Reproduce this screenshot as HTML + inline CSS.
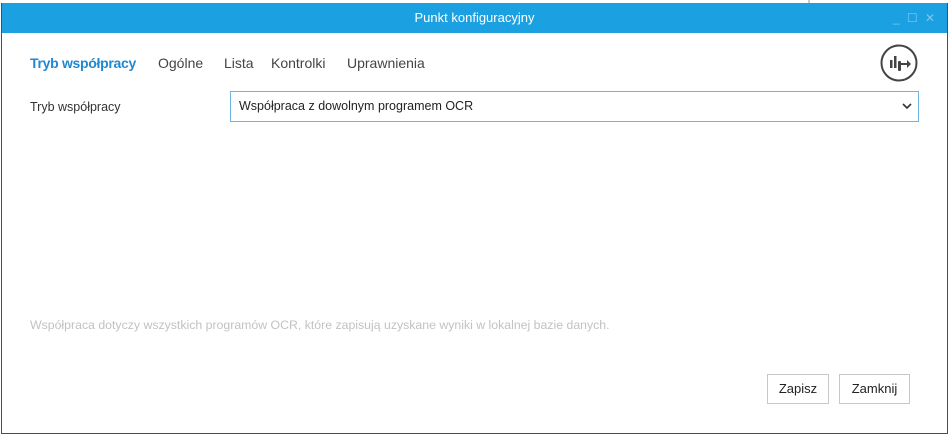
<!DOCTYPE html>
<html><head><meta charset="utf-8"><style>
body{margin:0;width:950px;height:422px;background:#fff;position:relative;overflow:hidden;font-family:"Liberation Sans",sans-serif}
.win{position:absolute;left:1px;top:3px;width:945px;height:430px;border:1px solid #1e5a8a;border-top:none;background:#fff}
.title{position:absolute;left:0;top:0;width:945px;height:30px;background:#1ba1e2;color:#fff;font-size:13px;text-align:center;line-height:30px}
.ctl{position:absolute;right:10px;top:0;color:#7fc7ee;font-size:12px;line-height:30px;letter-spacing:2px}
.tab{position:absolute;top:55px;font-size:14px;color:#444;white-space:nowrap}
.a{color:#1e88d2;font-weight:bold}
.lbl{position:absolute;left:30px;top:100px;font-size:12.5px;color:#333}
.sel{position:absolute;left:230px;top:91px;width:689px;height:31px;border:1px solid #6cb4e4;box-sizing:border-box;font-size:12.5px;color:#222;line-height:29px;padding-left:8px}
.sel svg{position:absolute;right:6px;top:11px}
.note{position:absolute;left:30px;top:318px;font-size:12.3px;color:#c2c2c2;white-space:nowrap}
.btn{position:absolute;top:374px;height:30px;border:1px solid #c8c8c8;box-sizing:border-box;font-size:13px;color:#222;text-align:center;line-height:28px;background:#fff}
</style></head><body>
<div style="position:absolute;left:808px;top:0;width:2px;height:3px;background:#c8ccd8"></div>
<div class="win">
<div class="title">Punkt konfiguracyjny<div class="ctl">_ ☐ ✕</div></div>
</div>
<div class="tab a" style="left:30px;letter-spacing:-0.3px">Tryb współpracy</div>
<div class="tab" style="left:158px">Ogólne</div>
<div class="tab" style="left:224px">Lista</div>
<div class="tab" style="left:271px">Kontrolki</div>
<div class="tab" style="left:347px">Uprawnienia</div>
<svg style="position:absolute;left:880px;top:44px" width="38" height="38" viewBox="0 0 38 38">
<circle cx="19" cy="19" r="17.5" fill="none" stroke="#444" stroke-width="2"/>
<rect x="10" y="16" width="2.5" height="8" fill="#444"/>
<rect x="14" y="12" width="2.5" height="12" fill="#444"/>
<rect x="18" y="17" width="3" height="10" rx="1" fill="#444"/>
<path d="M21 19h6v-3l4 4-4 4v-3h-6z" fill="#444"/>
</svg>
<div class="lbl">Tryb współpracy</div>
<div class="sel">Współpraca z dowolnym programem OCR<svg width="10" height="7" viewBox="0 0 10 7"><path d="M1 1l4 4 4-4" fill="none" stroke="#333" stroke-width="1.6"/></svg></div>
<div class="note">Współpraca dotyczy wszystkich programów OCR, które zapisują uzyskane wyniki w lokalnej bazie danych.</div>
<div class="btn" style="left:767px;width:62px">Zapisz</div>
<div class="btn" style="left:839px;width:71px">Zamknij</div>
</body></html>
